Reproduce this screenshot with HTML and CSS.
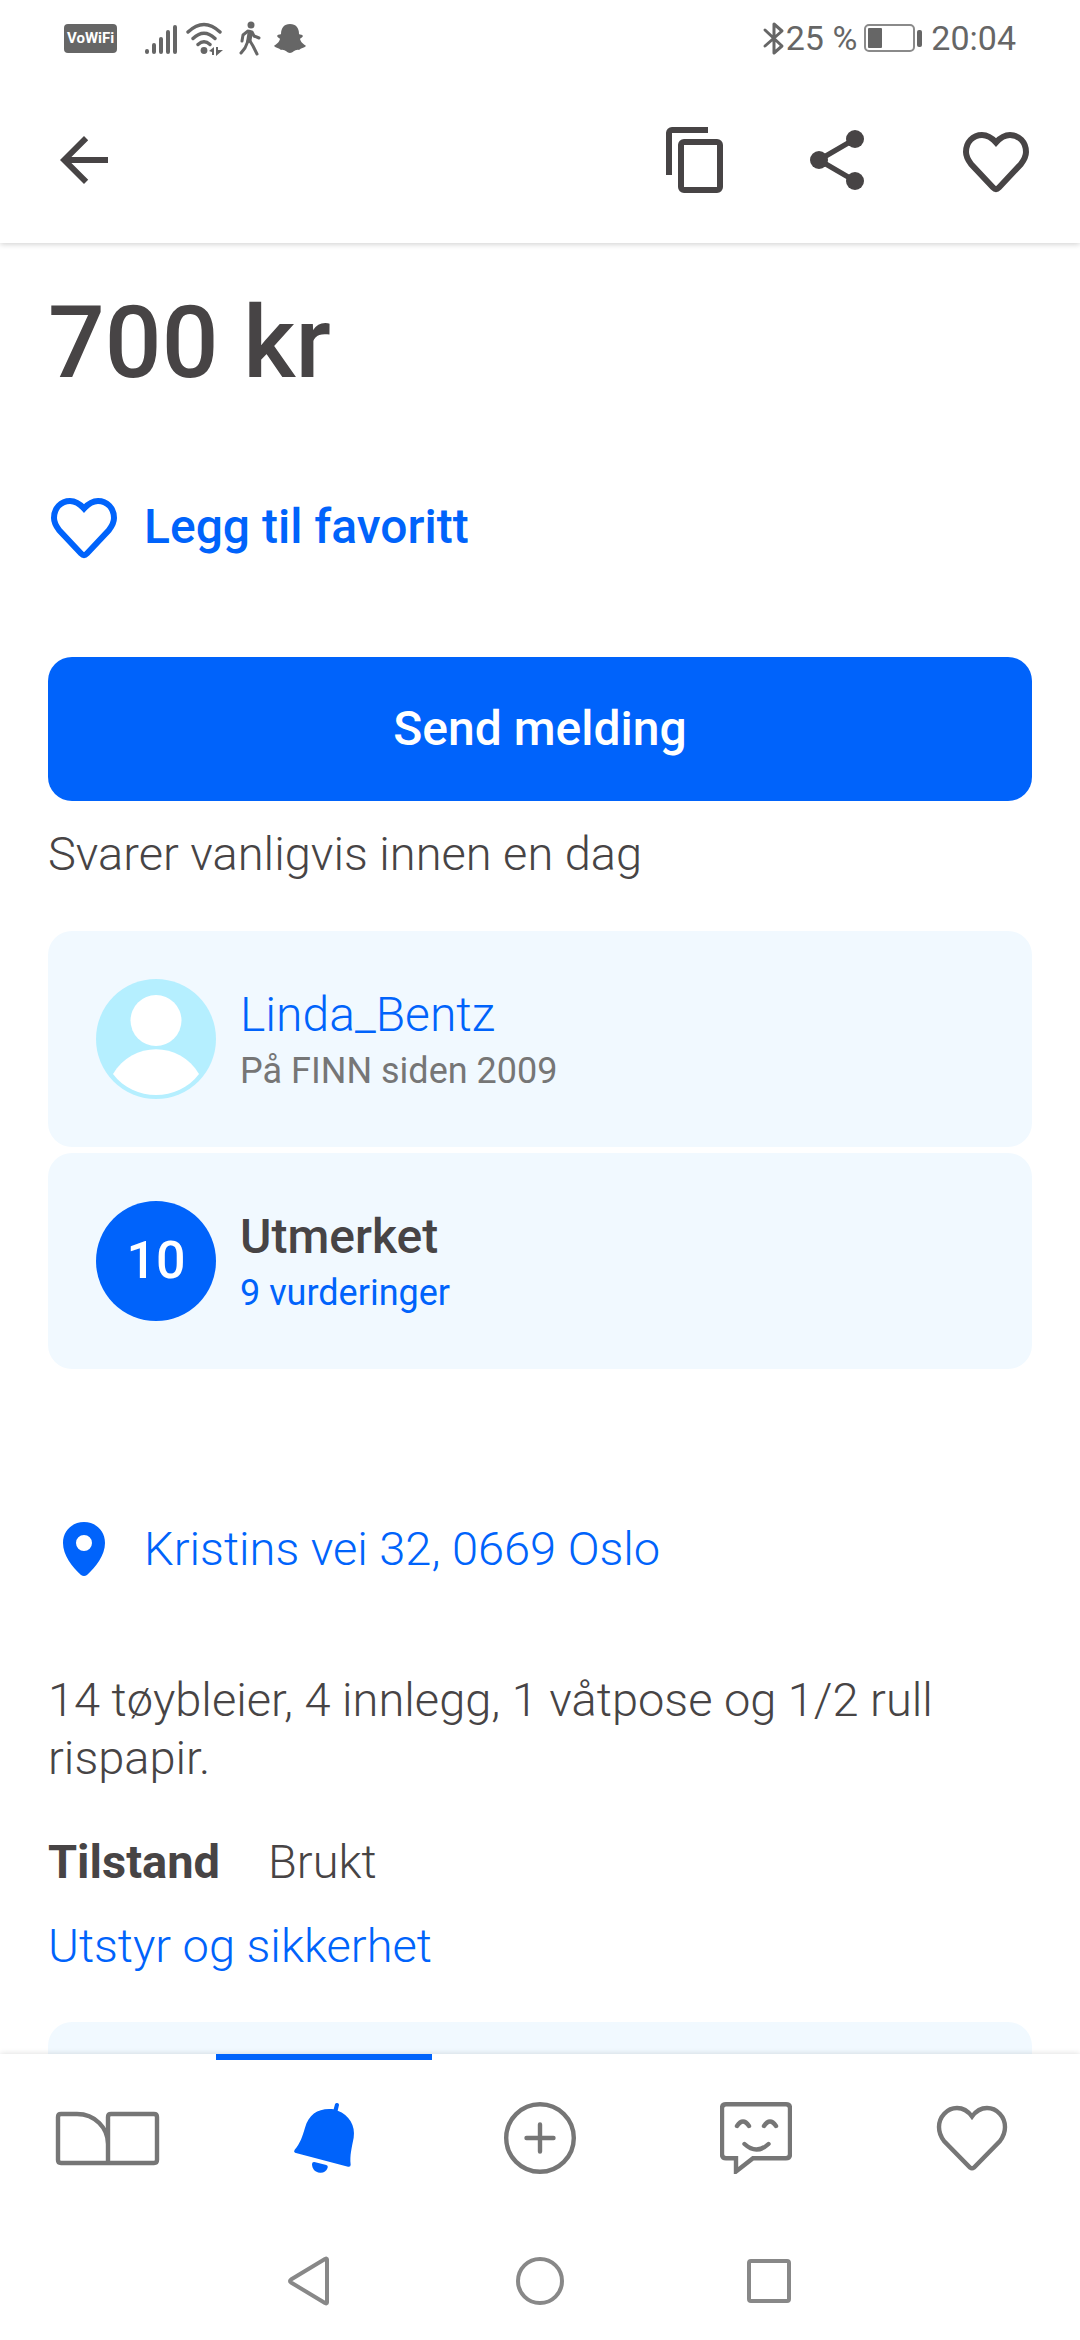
FILE: index.html
```html
<!DOCTYPE html>
<html lang="nb">
<head>
  <meta charset="UTF-8">
  <meta name="viewport" content="width=device-width, initial-scale=1">
  <title>14 tøybleier – FINN torget</title>
  <link rel="stylesheet" href="styles.css">
</head>
<body>
  <!-- Statuslinje -->
  <div class="status-bar">
    <div class="status-left">
      <span class="vowifi">VoWiFi</span>
      <svg class="status-icon" width="36" height="36" viewBox="0 0 36 36" fill="none" stroke="currentColor" stroke-width="4" stroke-linecap="round">
        <path d="M4 31v1M11 25v7M18 19v13M25 12v20M32 7v25"/>
      </svg>
      <svg class="status-icon" width="40" height="36" viewBox="0 0 40 36">
        <g fill="none" stroke="currentColor" stroke-width="3.4" stroke-linecap="round">
          <path d="M3 12Q19 -3 35 12M8 18.500Q19 8 30 18.500M13 24.500Q19 19 25 24.500"/>
        </g>
        <circle cx="19" cy="30.500" r="3.400" fill="currentColor"/>
        <path d="M24 31l5-4v8h-2v-3zM31 27h2v3l5 0-7 6z" fill="currentColor"/>
      </svg>
      <svg class="status-icon walk" width="24" height="36" viewBox="0 0 24 36">
        <circle cx="14" cy="5" r="3.500" fill="currentColor"/>
        <path d="M11 10q3-1 5 2l-2 11-5-1z" fill="currentColor"/>
        <path d="M11 11l-5 4-1 6M15 12l2 4 5 2M11 21l-3 7-4 5M13 21l3 5 4 8" fill="none" stroke="currentColor" stroke-width="3" stroke-linecap="round" stroke-linejoin="round"/>
      </svg>
      <svg class="status-icon" width="34" height="36" viewBox="0 0 34 36">
        <path d="M17 4c6 0 9 4 9 10 1 1 3 0 4 2-1 2-3 2-3 3 1 4 4 5 6 7-2 2-5 2-7 4-4-1-6 3-9 3s-5-4-9-3c-2-2-5-2-7-4 2-2 5-3 6-7 0-1-2-1-3-3 1-2 3-1 4-2 0-6 3-10 9-10z" fill="currentColor"/>
      </svg>
    </div>
    <div class="status-right">
      <svg width="24" height="36" viewBox="0 0 24 36" fill="none" stroke="currentColor" stroke-width="3" stroke-linejoin="round" stroke-linecap="round">
        <path d="M3 10l17 16-8 7V4l8 7L3 26"/>
      </svg>
      <span>25 %</span>
      <svg class="battery" width="60" height="30" viewBox="0 0 60 30">
        <rect x="2" y="2" width="49" height="26" rx="4" fill="none" stroke="#8a8a8a" stroke-width="2"/>
        <rect x="5" y="5" width="14" height="20" rx="1" fill="currentColor"/>
        <rect x="54" y="7" width="5" height="17" rx="2" fill="currentColor"/>
      </svg>
      <span>20:04</span>
    </div>
  </div>

  <header>
    <button class="icon-btn" aria-label="Tilbake">
      <svg width="72" height="72" viewBox="0 0 24 24" fill="currentColor">
        <path d="M20 11H7.800l5.600-5.600L12 4l-8 8 8 8 1.400-1.400L7.800 13H20z"/>
      </svg>
    </button>
    <div class="header-actions">
      <button class="icon-btn" aria-label="Kopier">
        <svg width="72" height="72" viewBox="0 0 24 24" fill="none" stroke="currentColor" stroke-width="2">
          <path d="M3 17V3a1 1 0 0 1 1-1h12"/>
          <rect x="7" y="6" width="13" height="16" rx="1"/>
        </svg>
      </button>
      <button class="icon-btn" aria-label="Del">
        <svg width="72" height="72" viewBox="0 0 24 24" fill="currentColor">
          <path d="M18 5L6 12l12 7" fill="none" stroke="currentColor" stroke-width="1.800"/>
          <circle cx="6" cy="12" r="3"/>
          <circle cx="18" cy="5" r="3"/>
          <circle cx="18" cy="19" r="3"/>
        </svg>
      </button>
      <button class="icon-btn header-heart" aria-label="Favoritt">
        <svg width="72" height="72" viewBox="-3 -8 72 72" fill="none" stroke="currentColor" stroke-width="6">
          <path d="M33 10.500C29 6 25 3 19 3C10 3 3 10 3 20C3 25 5 28 8 32L30 55.500Q33 58.500 36 55.500L58 32C61 28 63 25 63 20C63 10 56 3 47 3C41 3 37 6 33 10.500z"/>
        </svg>
      </button>
    </div>
  </header>

  <main>
    <h1>700 kr</h1>

    <button class="row-link favorite">
      <svg width="72" height="68" viewBox="-3 -5 72 68" fill="none" stroke="currentColor" stroke-width="6">
        <path d="M33 10.500C29 6 25 3 19 3C10 3 3 10 3 20C3 25 5 28 8 32L30 55.500Q33 58.500 36 55.500L58 32C61 28 63 25 63 20C63 10 56 3 47 3C41 3 37 6 33 10.500z"/>
      </svg>
      Legg til favoritt
    </button>

    <button class="send-btn">Send melding</button>
    <p class="reply-time">Svarer vanligvis innen en dag</p>

    <section class="cards">
      <div class="card">
        <svg class="avatar" viewBox="0 0 120 120">
          <circle cx="60" cy="60" r="60" fill="#b5efff"/>
          <circle cx="60" cy="41.500" r="25.500" fill="#fff"/>
          <path d="M17 95C36 62 84 62 103 95C82 123 38 123 17 95z" fill="#fff"/>
        </svg>
        <div class="card-text">
          <a href="#" class="name">Linda_Bentz</a>
          <span class="small">På FINN siden 2009</span>
        </div>
      </div>
      <div class="card">
        <div class="score">10</div>
        <div class="card-text">
          <strong>Utmerket</strong>
          <a href="#" class="small">9 vurderinger</a>
        </div>
      </div>
    </section>

    <a href="#" class="row-link location">
      <svg width="72" height="68" viewBox="0 0 72 68">
        <path d="M36 7C24 7 15 16 15 28C15 40 24 52 33 60Q36 62 39 60C48 52 57 40 57 28C57 16 48 7 36 7zM36 20a8 8 0 1 1 0 16a8 8 0 1 1 0-16z" fill="currentColor" fill-rule="evenodd"/>
      </svg>
      Kristins vei 32, 0669 Oslo
    </a>

    <p class="description">14 tøybleier, 4 innlegg, 1 våtpose og 1/2 rull rispapir.</p>

    <dl class="details">
      <dt>Tilstand</dt>
      <dd>Brukt</dd>
    </dl>
    <a href="#" class="category">Utstyr og sikkerhet</a>

    <div class="card next-card"></div>
  </main>

  <nav class="tab-bar">
    <a href="#" class="tab" aria-label="Forsiden">
      <svg width="108" height="72" viewBox="0 0 108 72" fill="none" stroke="currentColor" stroke-width="4.400">
        <path d="M54 61H7q-3 0-3-3V15q0-3 3-3H23C41 12 54 26 54 42zM54 61V15q0-3 3-3h43q3 0 3 3v43q0 3-3 3z"/>
      </svg>
    </a>
    <a href="#" class="tab active" aria-label="Varslinger">
      <svg width="72" height="72" viewBox="774 186 216 216" fill="currentColor">
        <path d="M911 208l4-15q2-5 7-4q6 1 5 6l-4 17C957 224 977 257 971 293C965 325 959 345 962 374Q962 382 954 380L795 338Q790 335 794 329C810 311 818 288 825 263C837 221 868 203 911 208z"/>
        <path d="M853 366l36 9q6 2 4 8C889 394 880 399 870 398C854 396 846 386 846 371q1-6 7-5z"/>
      </svg>
    </a>
    <a href="#" class="tab" aria-label="Ny annonse">
      <svg width="72" height="72" viewBox="0 0 72 72" fill="none" stroke="currentColor" stroke-width="4.400" stroke-linecap="round">
        <circle cx="36" cy="36" r="33.800"/>
        <path d="M36 22.500v27M22.500 36h27"/>
      </svg>
    </a>
    <a href="#" class="tab" aria-label="Meldinger">
      <svg width="72" height="72" viewBox="0 0 72 72" fill="none" stroke="currentColor" stroke-width="4.400" stroke-linecap="round">
        <path d="M6 2.200h60q4 0 4 4v46q0 4-4 4H33L16 69.500V56.200H6q-4 0-4-4v-46q0-4 4-4z"/>
        <path d="M17 24q6-9 12 0M44 24q6-9 12 0M24.500 42q12 11 24 0"/>
      </svg>
    </a>
    <a href="#" class="tab" aria-label="Favoritter">
      <svg width="72" height="72" viewBox="0 0 72 72" fill="none" stroke="currentColor" stroke-width="4.400">
        <path d="M36 14.500C32 9 27 6 21 6C11 6 3 15 3 25C3 30 5 35 8 39L34 65.500Q36 67 38 65.500L64 39C67 35 69 30 69 25C69 15 61 6 51 6C45 6 40 9 36 14.500z"/>
      </svg>
    </a>
  </nav>

  <!-- Systemknapper -->
  <div class="system-nav">
    <button class="icon-btn" aria-label="Tilbake">
      <svg width="48" height="52" viewBox="0 0 48 52" fill="none" stroke="currentColor" stroke-width="4" stroke-linejoin="round">
        <path d="M41 4.500v43Q41 49 39 48L5 27.500Q3 26 5 24.500L39 4Q41 3 41 4.500z"/>
      </svg>
    </button>
    <button class="icon-btn" aria-label="Hjem">
      <svg width="48" height="52" viewBox="0 0 48 52" fill="none" stroke="currentColor" stroke-width="4">
        <circle cx="24" cy="26" r="22"/>
      </svg>
    </button>
    <button class="icon-btn" aria-label="Nylige apper">
      <svg width="48" height="52" viewBox="0 0 48 52" fill="none" stroke="currentColor" stroke-width="4">
        <rect x="3" y="6" width="40" height="40" rx="2"/>
      </svg>
    </button>
  </div>
</body>
</html>
```
FILE: styles.css
```css
* {
  box-sizing: border-box;
}

body {
  margin: 0;
  height: 100vh;
  display: flex;
  flex-direction: column;
  font-family: Roboto, "Liberation Sans", sans-serif;
  font-size: 47px;
  font-weight: 300;
  line-height: 58px;
  color: #474445;
  background: #fff;
}

h1, p, dl, dd {
  margin: 0;
}

a {
  color: #0063fb;
  text-decoration: none;
}

button {
  font: inherit;
  border: none;
  background: none;
  padding: 0;
  cursor: pointer;
}

svg {
  display: block;
  flex: none;
}

/* --- Statuslinje --- */
.status-bar {
  display: flex;
  justify-content: space-between;
  align-items: center;
  height: 76px;
  flex: none;
  padding: 0 64px;
  font-size: 34px;
  font-weight: 400;
  color: #666;
  background: #fff;
  position: relative;
  z-index: 2;
}

.status-left, .status-right {
  display: flex;
  align-items: center;
}

.status-icon {
  margin-right: 6px;
}

.walk {
  margin: 0 12px 0 6px;
}

.vowifi {
  margin-right: 26px;
  padding: 0 3px;
  border-radius: 4px;
  background: #666;
  color: #fff;
  font-size: 15px;
  font-weight: 700;
  line-height: 29px;
}

.battery {
  margin: 0 8px 0 6px;
}

/* --- Topplinje --- */
header {
  display: flex;
  justify-content: space-between;
  align-items: center;
  height: 167px;
  flex: none;
  padding: 0 48px;
  box-shadow: 0 1px 6px rgba(0, 0, 0, 0.2);
  z-index: 1;
}

.icon-btn {
  color: inherit;
}

.header-actions {
  display: flex;
  gap: 69px;
}

.header-heart {
  margin-left: 18px;
}

/* --- Innhold --- */
main {
  flex: 1;
  min-height: 0;
  overflow-y: auto;
  scrollbar-width: none;
  padding: 40px 48px 0;
}

h1 {
  font-size: 100px;
  font-weight: 500;
  line-height: 120px;
}

.row-link {
  display: flex;
  align-items: center;
  gap: 24px;
  color: #0063fb;
}

.favorite {
  margin-top: 90px;
  font-size: 48px;
  font-weight: 500;
}

.send-btn {
  display: block;
  width: 100%;
  height: 144px;
  margin-top: 96px;
  border-radius: 24px;
  background: #0063fb;
  color: #fff;
  font-size: 48px;
  font-weight: 500;
}

.reply-time {
  margin-top: 24px;
}

.cards {
  display: grid;
  gap: 6px;
  margin-top: 48px;
}

.card {
  display: flex;
  align-items: center;
  gap: 24px;
  padding: 48px;
  border-radius: 24px;
  background: #f1f9ff;
}

.avatar, .score {
  width: 120px;
  height: 120px;
  flex: none;
}

.score {
  display: flex;
  align-items: center;
  justify-content: center;
  border-radius: 50%;
  background: #0063fb;
  color: #fff;
  font-size: 52px;
  font-weight: 500;
}

.card-text {
  display: flex;
  flex-direction: column;
  align-items: flex-start;
  padding-top: 6px;
  font-size: 48px;
}

.card-text strong {
  font-weight: 500;
}

.small {
  font-size: 36px;
  font-weight: 400;
  line-height: 54px;
}

span.small {
  color: #767676;
}

.location {
  margin-top: 146px;
}

.description {
  margin-top: 88px;
}

.details {
  display: flex;
  gap: 48px;
  margin-top: 46px;
}

.details dt {
  font-weight: 700;
}

.category {
  display: block;
  margin-top: 26px;
}

.next-card {
  min-height: 216px;
  margin-top: 47px;
}

/* --- Bunnmeny --- */
.tab-bar {
  display: grid;
  grid-template-columns: repeat(5, 1fr);
  height: 168px;
  flex: none;
  background: #fff;
  box-shadow: 0 0 6px rgba(0, 0, 0, 0.15);
  z-index: 1;
}

.tab {
  display: flex;
  align-items: center;
  justify-content: center;
  border-top: 6px solid transparent;
  padding-bottom: 6px;
  color: #767676;
}

.tab.active {
  border-color: #0063fb;
  color: #0063fb;
}

.system-nav {
  display: flex;
  align-items: center;
  justify-content: center;
  gap: 182px;
  height: 118px;
  flex: none;
  background: #fff;
  color: #888;
  z-index: 1;
}
```
